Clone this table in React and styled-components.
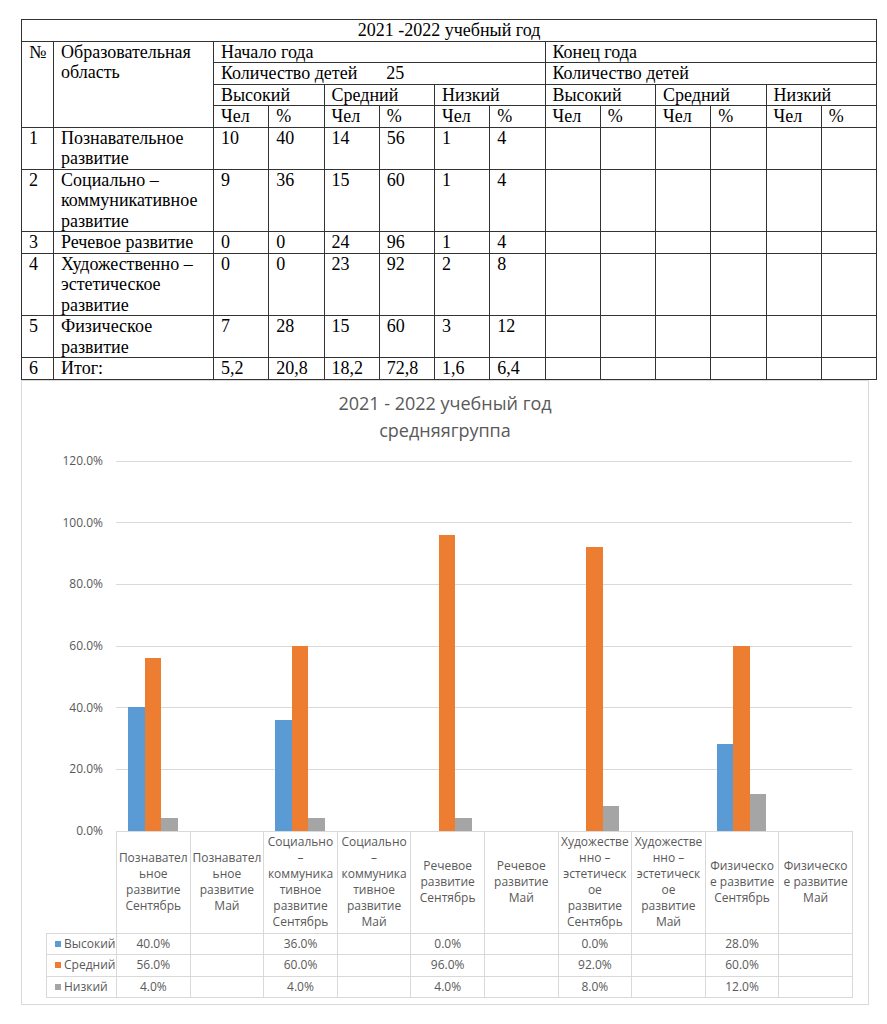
import React from 'react';
import styled, { createGlobalStyle } from 'styled-components';

const GlobalStyle = createGlobalStyle`
  html, body { margin: 0; padding: 0; background: #fff; }
  body { font-family: "Liberation Serif", "Times New Roman", serif; }
`;

const Page = styled.div`
  width: 887px;
  box-sizing: border-box;
  padding: 19px 0 0 21px;
`;

/* ---------- report table ---------- */
const Report = styled.table`
  border-collapse: collapse;
  table-layout: fixed;
  width: 855px;
  font-family: "Liberation Serif", "Times New Roman", serif;
  font-size: 18px;
  line-height: 20.5px;
  color: #000;
`;

const Cell = styled.td`
  border: 1px solid #333;
  padding: 0 7px;
  vertical-align: top;
  text-align: ${p => (p.$center ? 'center' : 'left')};
  overflow: hidden;
`;

const Count = styled.span`
  margin-left: 29px;
`;

/* ---------- chart ---------- */
const ChartBox = styled.div`
  width: 848px;
  box-sizing: border-box;
  border: 1px solid #d9d9d9;
  padding: 9px 0 6px 0;
  font-family: "Open Sans", "Noto Sans", sans-serif;
  color: #595959;
`;

const Title = styled.div`
  text-align: center;
  font-size: 18px;
  line-height: 27px;
`;

const Body = styled.div`
  display: grid;
  grid-template-columns: 94px 736px;
  margin-top: 17px;
`;

const Axis = styled.div`
  height: 370px;
  display: flex;
  flex-direction: column;
  justify-content: space-between;
`;

const AxisLabel = styled.div`
  height: 0;
  display: flex;
  align-items: center;
  justify-content: flex-end;
  padding-right: 13px;
  font-size: 12px;
`;

const Plot = styled.div`
  display: grid;
  height: 370px;
  & > * { grid-area: 1 / 1; }
`;

const Lines = styled.div`
  display: flex;
  flex-direction: column;
`;

const GridLine = styled.div`
  flex: 1;
  border-top: 1px solid #d9d9d9;
`;

const Bars = styled.div`
  display: grid;
  grid-template-columns: repeat(10, 1fr);
`;

const Group = styled.div`
  display: flex;
  justify-content: center;
  align-items: flex-end;
`;

const Bar = styled.div`
  width: 16.5px;
  background: ${p => p.$color};
`;

const DataTable = styled.table`
  grid-column: 1 / -1;
  margin-left: 24px;
  border-collapse: collapse;
  table-layout: fixed;
  width: 806px;
  font-size: 12px;
  color: #595959;
`;

const Corner = styled.th`
  border: none;
  padding: 0;
`;

const CatHead = styled.th`
  border: 1px solid #d9d9d9;
  height: 101px;
  padding: 0;
  font-weight: normal;
  line-height: 16px;
  text-align: center;
  vertical-align: middle;
  white-space: nowrap;
`;

const Val = styled.td`
  border: 1px solid #d9d9d9;
  padding: 0;
  line-height: 20.5px;
  text-align: center;
  white-space: nowrap;
`;

const LegendCell = styled(Val)`
  text-align: left;
  padding-left: 8px;
`;

const Key = styled.span`
  display: inline-block;
  width: 6px;
  height: 6px;
  margin-right: 3px;
  vertical-align: 1px;
  background: ${p => p.$color};
`;

const rows = [
  { n: '1', name: 'Познавательное развитие', v: ['10', '40', '14', '56', '1', '4'] },
  { n: '2', name: 'Социально – коммуникативное развитие', v: ['9', '36', '15', '60', '1', '4'] },
  { n: '3', name: 'Речевое развитие', v: ['0', '0', '24', '96', '1', '4'] },
  { n: '4', name: 'Художественно – эстетическое развитие', v: ['0', '0', '23', '92', '2', '8'] },
  { n: '5', name: 'Физическое развитие', v: ['7', '28', '15', '60', '3', '12'] },
  { n: '6', name: 'Итог:', v: ['5,2', '20,8', '18,2', '72,8', '1,6', '6,4'] },
];

const categories = [
  ['Познавател', 'ьное', 'развитие', 'Сентябрь'],
  ['Познавател', 'ьное', 'развитие', 'Май'],
  ['Социально', '–', 'коммуника', 'тивное', 'развитие', 'Сентябрь'],
  ['Социально', '–', 'коммуника', 'тивное', 'развитие', 'Май'],
  ['Речевое', 'развитие', 'Сентябрь'],
  ['Речевое', 'развитие', 'Май'],
  ['Художестве', 'нно –', 'эстетическ', 'ое', 'развитие', 'Сентябрь'],
  ['Художестве', 'нно –', 'эстетическ', 'ое', 'развитие', 'Май'],
  ['Физическо', 'е развитие', 'Сентябрь'],
  ['Физическо', 'е развитие', 'Май'],
];

const series = [
  { name: 'Высокий', color: '#5b9bd5', values: [40, null, 36, null, 0, null, 0, null, 28, null] },
  { name: 'Средний', color: '#ed7d31', values: [56, null, 60, null, 96, null, 92, null, 60, null] },
  { name: 'Низкий', color: '#a5a5a5', values: [4, null, 4, null, 4, null, 8, null, 12, null] },
];

const axisTicks = ['120.0%', '100.0%', '80.0%', '60.0%', '40.0%', '20.0%', '0.0%'];
const PLOT_H = 370;
const MAX = 120;

export default function App() {
  return (
    <>
      <GlobalStyle />
      <Page>
        <Report>
          <colgroup>
            <col style={{ width: 32 }} />
            <col style={{ width: 160 }} />
            {Array.from({ length: 12 }).map((_, i) => (
              <col key={i} style={{ width: 55.25 }} />
            ))}
          </colgroup>
          <tbody>
            <tr>
              <Cell colSpan={14} $center>2021 -2022 учебный год</Cell>
            </tr>
            <tr>
              <Cell rowSpan={4}>№</Cell>
              <Cell rowSpan={4}>Образовательная область</Cell>
              <Cell colSpan={6}>Начало года</Cell>
              <Cell colSpan={6}>Конец года</Cell>
            </tr>
            <tr>
              <Cell colSpan={6}>Количество детей<Count>25</Count></Cell>
              <Cell colSpan={6}>Количество детей</Cell>
            </tr>
            <tr>
              {['Высокий', 'Средний', 'Низкий', 'Высокий', 'Средний', 'Низкий'].map((t, i) => (
                <Cell key={i} colSpan={2}>{t}</Cell>
              ))}
            </tr>
            <tr>
              {Array.from({ length: 6 }).flatMap((_, i) => [
                <Cell key={`c${i}`}>Чел</Cell>,
                <Cell key={`p${i}`}>%</Cell>,
              ])}
            </tr>
            {rows.map(r => (
              <tr key={r.n}>
                <Cell>{r.n}</Cell>
                <Cell>{r.name}</Cell>
                {r.v.map((x, i) => (
                  <Cell key={i}>{x}</Cell>
                ))}
                {Array.from({ length: 6 }).map((_, i) => (
                  <Cell key={`e${i}`} />
                ))}
              </tr>
            ))}
          </tbody>
        </Report>

        <ChartBox>
          <Title>
            <div>2021 - 2022 учебный год</div>
            <div>средняягруппа</div>
          </Title>
          <Body>
            <Axis>
              {axisTicks.map(t => (
                <AxisLabel key={t}>{t}</AxisLabel>
              ))}
            </Axis>
            <Plot>
              <Lines>
                {Array.from({ length: 6 }).map((_, i) => (
                  <GridLine key={i} />
                ))}
              </Lines>
              <Bars>
                {categories.map((_, ci) => (
                  <Group key={ci}>
                    {series[0].values[ci] !== null &&
                      series.map(s => (
                        <Bar
                          key={s.name}
                          $color={s.color}
                          style={{ height: (s.values[ci] / MAX) * PLOT_H }}
                        />
                      ))}
                  </Group>
                ))}
              </Bars>
            </Plot>
            <DataTable>
              <colgroup>
                <col style={{ width: 70 }} />
                {categories.map((_, i) => (
                  <col key={i} style={{ width: 73.6 }} />
                ))}
              </colgroup>
              <tbody>
                <tr>
                  <Corner />
                  {categories.map((lines, i) => (
                    <CatHead key={i}>
                      {lines.map((l, j) => (
                        <div key={j}>{l}</div>
                      ))}
                    </CatHead>
                  ))}
                </tr>
                {series.map(s => (
                  <tr key={s.name}>
                    <LegendCell>
                      <Key $color={s.color} />
                      {s.name}
                    </LegendCell>
                    {s.values.map((v, i) => (
                      <Val key={i}>{v === null ? '' : `${v.toFixed(1)}%`}</Val>
                    ))}
                  </tr>
                ))}
              </tbody>
            </DataTable>
          </Body>
        </ChartBox>
      </Page>
    </>
  );
}
